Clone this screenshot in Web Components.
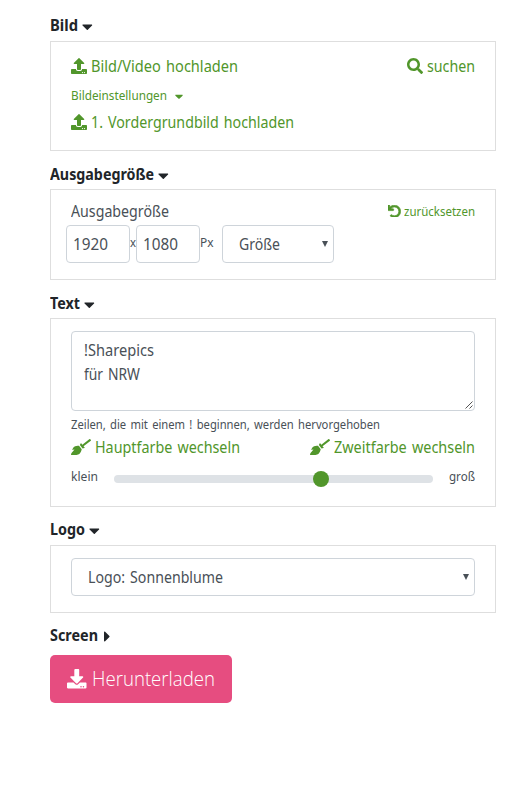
<!DOCTYPE html>
<html lang="de">
<head>
<meta charset="utf-8">
<title>Sharepic</title>
<style>
body { margin: 0; background: #fff; color: #495057; font: 15.5px "Noto Sans", "Open Sans", sans-serif; }
</style>
</head>
<body>
<sharepic-form></sharepic-form>
<script>
const dots = 'm-124 88c0-11-9-20-20-20s-20 9-20 20 9 20 20 20 20-9 20-20zm64 0c0-11-9-20-20-20s-20 9-20 20 9 20 20 20 20-9 20-20z';
const ICONS = {
  upload: [512, 'M296 384h-80c-13.3 0-24-10.7-24-24V192h-87.7c-17.8 0-26.7-21.5-14.1-34.1L242.3 5.7c7.5-7.5 19.8-7.5 27.3 0l152.2 152.2c12.6 12.6 3.7 34.1-14.1 34.1H320v168c0 13.3-10.7 24-24 24zm216-8v112c0 13.3-10.7 24-24 24H24c-13.3 0-24-10.7-24-24V376c0-13.3 10.7-24 24-24h136v8c0 30.9 25.1 56 56 56h80c30.9 0 56-25.1 56-56v-8h136c13.3 0 24 10.7 24 24z' + dots],
  download: [512, 'M216 0h80c13.3 0 24 10.7 24 24v168h87.7c17.8 0 26.7 21.5 14.1 34.1L269.7 378.3c-7.5 7.5-19.8 7.5-27.3 0L90.1 226.1c-12.6-12.6-3.7-34.1 14.1-34.1H192V24c0-13.3 10.7-24 24-24zm296 376v112c0 13.3-10.7 24-24 24H24c-13.3 0-24-10.7-24-24V376c0-13.3 10.7-24 24-24h146.7l49 49c20.1 20.1 52.5 20.1 72.6 0l49-49H488c13.3 0 24 10.7 24 24z' + dots],
  search: [512, 'M505 442.7L405.3 343c-4.5-4.5-10.6-7-17-7H372c27.6-35.3 44-79.7 44-128C416 93.1 322.9 0 208 0S0 93.1 0 208s93.1 208 208 208c48.3 0 92.7-16.4 128-44v16.3c0 6.4 2.5 12.5 7 17l99.7 99.7c9.4 9.4 24.6 9.4 33.9 0l28.3-28.3c9.4-9.4 9.4-24.6.1-34zM208 336c-70.7 0-128-57.2-128-128 0-70.7 57.2-128 128-128 70.7 0 128 57.2 128 128 0 70.7-57.2 128-128 128z'],
  undo: [512, 'M212.333 224.333H12c-6.627 0-12-5.373-12-12V12C0 5.373 5.373 0 12 0h48c6.627 0 12 5.373 12 12v78.112C117.773 39.279 184.26 7.47 258.175 8.007c136.906.994 246.448 111.623 246.157 248.532C504.041 393.258 393.12 504 256.333 504c-64.089 0-122.496-24.313-166.51-64.215-5.099-4.622-5.334-12.554-.467-17.42l33.967-33.967c4.474-4.474 11.662-4.717 16.401-.525C170.76 415.336 211.58 432 256.333 432c97.268 0 176-78.716 176-176 0-97.267-78.716-176-176-176-58.496 0-110.28 28.476-142.274 72.333h98.274c6.627 0 12 5.373 12 12v48c0 6.627-5.373 12-12 12z', 28],
  broom: [640, 'M256.47 216.77l86.73 109.18s-16.6 102.36-76.57 150.12C206.66 523.85 0 510.19 0 510.19s3.8-23.14 11-55.43l94.62-112.17c3.97-4.7-.87-11.62-6.65-9.5l-60.4 22.09c14.44-41.66 32.72-80.04 54.6-97.47 59.97-47.76 163.3-40.94 163.3-40.94zM636.53 31.03l-19.86-25c-5.49-6.9-15.52-8.05-22.41-2.56l-232.48 177.8-34.14-42.97c-5.09-6.41-15.14-5.21-18.59 2.21l-25.33 54.55 86.73 109.18 58.8-12.45c8-1.69 11.42-11.2 6.34-17.6l-34.09-42.92 232.48-177.8c6.89-5.48 8.04-15.53 2.55-22.44z'],
  down: [320, 'M31.3 192h257.3c17.8 0 26.7 21.5 14.1 34.1L174.1 354.8c-7.8 7.8-20.5 7.8-28.3 0L17.2 226.1C4.6 213.5 13.5 192 31.3 192z'],
  right: [192, 'M0 384.662V127.338c0-17.818 21.543-26.741 34.142-14.142l128.662 128.662c7.81 7.81 7.81 20.474 0 28.284L34.142 398.804C21.543 411.404 0 402.48 0 384.662z']
};

class BaseElement extends HTMLElement {
  connectedCallback() {
    if (this.shadowRoot) return;
    this.attachShadow({ mode: 'open' }).innerHTML = this.render();
    this.ready();
  }
  ready() {}
}

// Solid glyph, sized by its height.
customElements.define('ui-icon', class extends BaseElement {
  render() {
    const [w, d, stroke = 0] = ICONS[this.getAttribute('name')];
    const h = +this.getAttribute('size') || 16;
    return `<style>:host{display:block;flex:none;height:${h}px}svg{display:block}</style>
      <svg width="${w / 512 * h}" height="${h}" viewBox="0 0 ${w} 512" fill="currentColor" stroke="currentColor" stroke-width="${stroke}"><path d="${d}"/></svg>`;
  }
});

// Single line of text, condensed to a given width.
customElements.define('ui-text', class extends BaseElement {
  render() {
    return `<style>:host{display:block;flex:none;width:${this.getAttribute('w')}px;white-space:nowrap;word-spacing:1.5px}
      :host([small]){font-size:12.4px;padding-top:1px}
      span{display:inline-block;transform-origin:0 50%}</style><span><slot></slot></span>`;
  }
  ready() {
    const span = this.shadowRoot.querySelector('span');
    span.style.transform = `scaleX(${this.getAttribute('w') / span.getBoundingClientRect().width})`;
  }
});

customElements.define('ui-link', class extends BaseElement {
  render() {
    return `<style>:host{display:flex;align-items:center;gap:${this.getAttribute('gap') || 4}px;color:#51962b}</style>
      <ui-icon name="${this.getAttribute('icon')}" size="${this.getAttribute('size') || 16}"></ui-icon><slot></slot>`;
  }
});

customElements.define('ui-row', class extends BaseElement {
  render() {
    return `<style>:host{display:flex;align-items:center;height:${this.getAttribute('h')}px;line-height:${this.getAttribute('h')}px}
      :host([split]){justify-content:space-between}</style><slot></slot>`;
  }
});

customElements.define('ui-section', class extends BaseElement {
  render() {
    const open = this.hasAttribute('h');
    return `<style>:host{display:block}
      header{display:flex;align-items:center;gap:${open ? 4 : 6}px;height:24px;line-height:24px;font-weight:700;font-size:16.8px;color:#212529}
      header ui-icon{margin-top:${open ? 2 : 3}px}
      .panel{box-sizing:border-box;margin-top:${this.getAttribute('gap')}px;height:${this.getAttribute('h')}px;border:1px solid #dedede;padding:0 20px}</style>
      <header><ui-text w="${this.getAttribute('w')}">${this.getAttribute('label')}</ui-text><ui-icon name="${open ? 'down' : 'right'}" size="17"></ui-icon></header>
      ${open ? '<div class="panel"><slot></slot></div>' : ''}`;
  }
});

customElements.define('ui-field', class extends BaseElement {
  render() {
    return `<style>:host{display:flex;box-sizing:border-box;flex:none;align-items:center;justify-content:space-between;height:38px;line-height:36px;border:1px solid #ced4da;border-radius:4px;padding:0 6px;background:#fff}
      :host([select]){padding:0 5px 0 16px}
      svg{display:block}</style><slot></slot>
      ${this.hasAttribute('select') ? '<svg width="6" height="6" viewBox="0 0 6 6"><path d="M0 0h6L3 6z" fill="#495057"/></svg>' : ''}`;
  }
});

customElements.define('ui-textarea', class extends BaseElement {
  render() {
    return `<style>:host{display:flex;box-sizing:border-box;justify-content:space-between;align-items:flex-end;height:80px;line-height:24px;border:1px solid #ced4da;border-radius:4px;padding:0 1px 1px 12px}
      div{align-self:flex-start;padding-top:6px}svg{display:block}</style>
      <div><slot></slot></div>
      <svg width="8" height="8" viewBox="0 0 8 8" fill="none" stroke="#555" stroke-width="1"><path d="M.5 7.5l7-7M4.5 7.5l3-3"/></svg>`;
  }
});

customElements.define('ui-slider', class extends BaseElement {
  render() {
    return `<style>:host{display:flex;align-items:center;flex:none;width:319px;height:8px;margin-top:5px;border-radius:4px;background:#dee2e6}
      i{width:16px;height:16px;border-radius:50%;background:#51962b;margin-left:199px}</style><i></i>`;
  }
});

customElements.define('ui-button', class extends BaseElement {
  render() {
    return `<style>:host{display:flex;box-sizing:border-box;align-items:center;gap:5px;width:182px;height:48px;padding:0 17px;border-radius:5px;background:#e64d80;color:#fff;font:300 19.4px/48px "Open Sans","Noto Sans",sans-serif}</style><slot></slot>`;
  }
});

customElements.define('sharepic-form', class extends BaseElement {
  render() {
    return `<style>
      :host{display:block;width:446px;padding:13px 0 0 50px}
      .caret{color:#51962b;margin:2px 0 0 8px}
      .green{color:#51962b}
      .s2{margin-top:11px}.s3{margin-top:11px}.s4{margin-top:10px}.s5{margin-top:10px}
      .unit{margin-bottom:4px}
    </style>
    <ui-section label="Bild" w="28" gap="4" h="110">
      <ui-row h="24" split style="margin-top:12px">
        <ui-link icon="upload"><ui-text w="147">Bild/Video hochladen</ui-text></ui-link>
        <ui-link icon="search"><ui-text w="48">suchen</ui-text></ui-link>
      </ui-row>
      <ui-row h="20" style="margin-top:7px"><ui-text class="green" small w="96">Bildeinstellungen</ui-text><ui-icon class="caret" name="down" size="12.8"></ui-icon></ui-row>
      <ui-row h="24" style="margin-top:5px"><ui-link icon="upload"><ui-text w="203">1. Vordergrundbild hochladen</ui-text></ui-link></ui-row>
    </ui-section>
    <ui-section class="s2" label="Ausgabegröße" w="104" gap="3" h="91">
      <ui-row h="24" split style="margin-top:9px">
        <ui-text w="98">Ausgabegröße</ui-text>
        <ui-link icon="undo" size="12.8" gap="3"><ui-text small w="71">zurücksetzen</ui-text></ui-link>
      </ui-row>
      <ui-row h="38" style="margin:2px 0 0 -5px">
        <ui-field style="width:64px"><ui-text w="35">1920</ui-text></ui-field>
        <ui-text class="unit" small w="6">x</ui-text>
        <ui-field style="width:64px"><ui-text w="35">1080</ui-text></ui-field>
        <ui-text class="unit" small w="13.5">Px</ui-text>
        <ui-field select style="width:112px;margin-left:8.5px"><ui-text w="41">Größe</ui-text></ui-field>
      </ui-row>
    </ui-section>
    <ui-section class="s3" label="Text" w="30" gap="3" h="189">
      <ui-textarea style="margin-top:12px"><ui-text w="70">!Sharepics</ui-text><ui-text w="56">für NRW</ui-text></ui-textarea>
      <ui-row h="20" style="margin-top:3px"><ui-text small w="309">Zeilen, die mit einem ! beginnen, werden hervorgehoben</ui-text></ui-row>
      <ui-row h="24" split style="margin-top:1px">
        <ui-link icon="broom"><ui-text w="145">Hauptfarbe wechseln</ui-text></ui-link>
        <ui-link icon="broom"><ui-text w="141">Zweitfarbe wechseln</ui-text></ui-link>
      </ui-row>
      <ui-row h="20" split style="margin-top:7px">
        <ui-text small w="27">klein</ui-text><ui-slider></ui-slider><ui-text small w="26">groß</ui-text>
      </ui-row>
    </ui-section>
    <ui-section class="s4" label="Logo" w="35" gap="4" h="68">
      <ui-field select style="margin-top:12px"><ui-text w="135">Logo: Sonnenblume</ui-text></ui-field>
    </ui-section>
    <ui-section class="s5" label="Screen" w="48"></ui-section>
    <ui-button style="margin-top:8px"><ui-icon name="download" size="19.5"></ui-icon><ui-text w="123">Herunterladen</ui-text></ui-button>`;
  }
});
</script>
</body>
</html>
